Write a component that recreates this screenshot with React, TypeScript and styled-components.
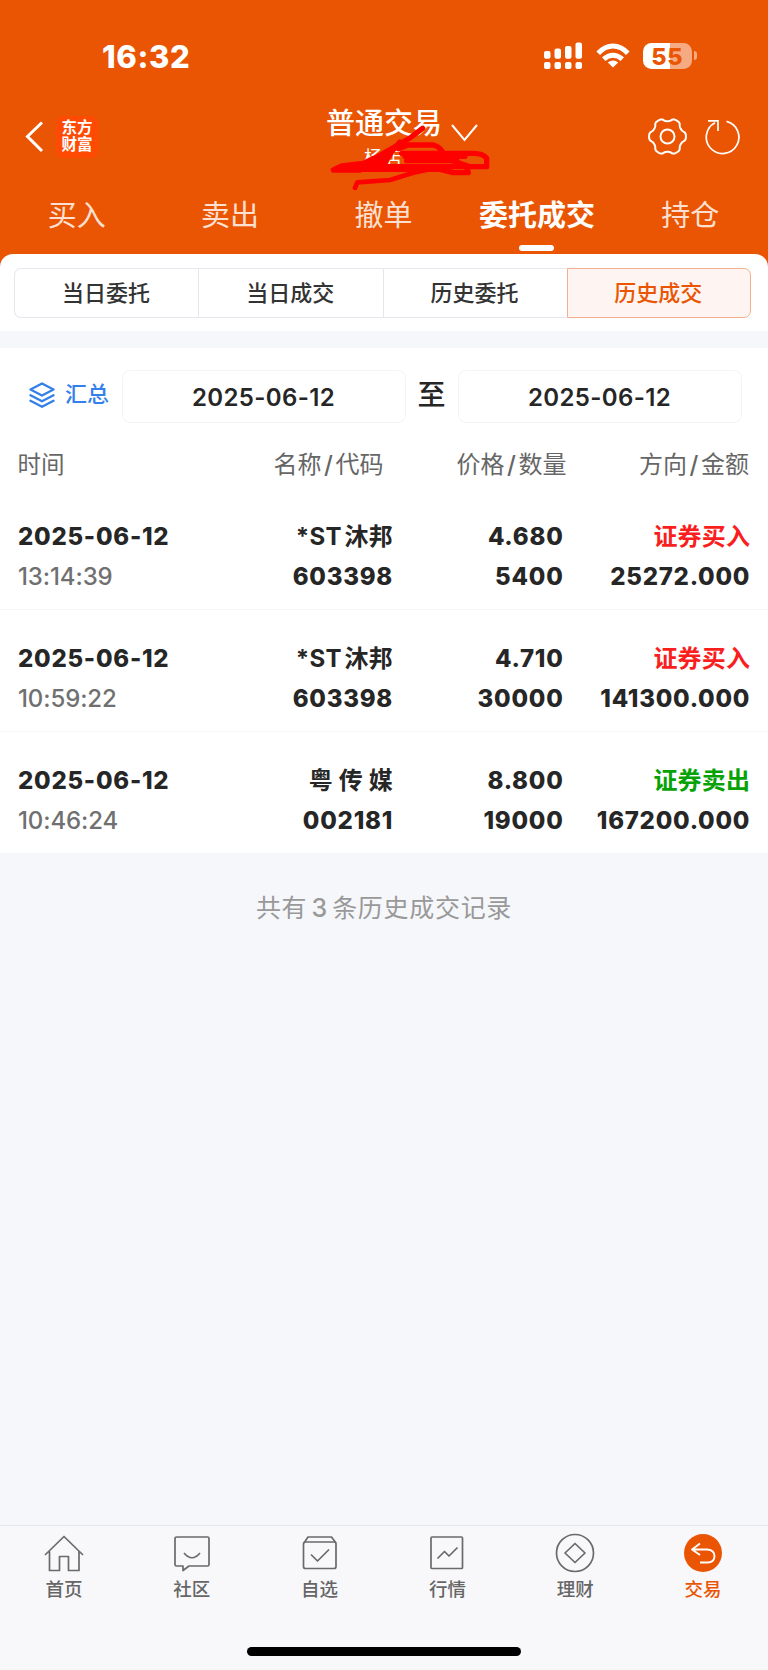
import React from "react";
import styled, { createGlobalStyle } from "styled-components";

const sans = `Inter, "Noto Sans CJK SC", sans-serif`;
const orange = "#ea5504";

const Global = createGlobalStyle`
  * { box-sizing: border-box; }
  body { margin: 0; background: #f6f7fa; font-family: ${sans}; color: #262626; }
  svg { display: block; flex: none; }
`;

const Screen = styled.div`
  width: 768px;
  height: 1670px;
  display: flex;
  flex-direction: column;
  overflow: hidden;
`;

const Top = styled.header`
  height: 268px;
  flex: none;
  background: ${orange};
  color: #fff;
`;

const StatusBar = styled.div`
  height: 90px;
  padding: 40px 71px 0 102px;
  display: flex;
  justify-content: space-between;
`;

const Clock = styled.span`
  font-size: 31px;
  line-height: 34px;
  font-weight: 800;
  letter-spacing: 0.6px;
`;

const StatusIcons = styled.div`
  display: flex;
  gap: 13px;
  align-items: flex-start;
`;

const Battery = styled.div`
  display: flex;
  align-items: center;
  gap: 1.5px;
  margin-top: 2.5px;
`;

const BatteryBody = styled.div`
  width: 49.5px;
  height: 26.5px;
  border-radius: 8.5px;
  background: linear-gradient(90deg, #fff 0 27.5px, #f5aa82 27.5px);
  color: ${orange};
  font-size: 23.5px;
  font-weight: 800;
  line-height: 27px;
  text-align: center;
  letter-spacing: 0.8px;
`;

const BatteryTip = styled.i`
  width: 3.5px;
  height: 9px;
  border-radius: 0 4px 4px 0;
  background: #f5aa82;
`;

const TitleBar = styled.div`
  height: 95px;
  padding: 0 28px 0 25px;
  display: grid;
  grid-template-columns: 301px 115px 1fr;
`;

const Brand = styled.div`
  display: flex;
  gap: 12px;
  padding-top: 25.5px;
`;

const Logo = styled.div`
  width: 42px;
  height: 42px;
  border-radius: 8px;
  background: #ff4a04;
  padding-top: 2px;
  font: 700 15.5px/17.5px "Noto Sans CJK SC", sans-serif;
  text-align: center;
`;

const Account = styled.div`
  position: relative;
`;

const Title = styled.div`
  font-size: 29px;
  line-height: 34px;
  font-weight: 500;
  margin-top: 17px;
  white-space: nowrap;
`;

const Owner = styled.div`
  font-size: 19px;
  line-height: 22px;
  padding-left: 38px;
  margin-top: 7px;
`;

const Scribble = styled.svg`
  position: absolute;
  left: -16px;
  top: 0;
`;

const Actions = styled.div`
  display: flex;
  padding-left: 10px;
`;

const TabRow = styled.nav`
  display: grid;
  grid-template-columns: repeat(5, 1fr);
  height: 68px;
  padding-right: 1px;
`;

const Tab = styled.span<{ $on?: boolean }>`
  display: flex;
  flex-direction: column;
  align-items: center;
  padding-top: 13px;
  font-size: 29px;
  line-height: 36px;
  font-weight: ${(p) => (p.$on ? 700 : 400)};
  color: ${(p) => (p.$on ? "#fff" : "#fde0d1")};
  &::after {
    content: "";
    width: 35px;
    height: 5.5px;
    border-radius: 3px;
    margin-top: 11px;
    background: ${(p) => (p.$on ? "#fff" : "transparent")};
  }
`;

const SegmentPanel = styled.div`
  height: 77.5px;
  margin-top: -14.5px;
  flex: none;
  background: #fff;
  border-radius: 13px 13px 0 0;
  padding: 14px 17px 0 14px;
`;

const Segments = styled.div`
  display: grid;
  grid-template-columns: repeat(4, 1fr);
  height: 49px;
`;

const Segment = styled.span<{ $on?: boolean }>`
  border: 1.5px solid ${(p) => (p.$on ? "#f3b08f" : "#e6e6ec")};
  border-right-width: ${(p) => (p.$on ? "1.5px" : "0")};
  background: ${(p) => (p.$on ? "#fef5f2" : "#fff")};
  color: ${(p) => (p.$on ? orange : "#333")};
  font-size: 22px;
  line-height: 48px;
  padding-right: 1px;
  font-weight: 500;
  text-align: center;
  &:first-child { border-radius: 7px 0 0 7px; }
  &:last-child { border-radius: 0 7px 7px 0; }
`;

const Content = styled.main`
  margin-top: 17px;
  background: #fff;
  flex: none;
`;

const Filter = styled.div`
  display: flex;
  height: 90px;
  padding: 22px 26px 0 29px;
`;

const Summary = styled.div`
  width: 93px;
  display: flex;
  gap: 10px;
  color: #3380ea;
  font-size: 22px;
  font-weight: 500;
  line-height: 30px;
  padding-top: 9px;
  svg { margin-top: 1px; }
`;

const DateBox = styled.div`
  width: 284px;
  height: 53px;
  border: 1.5px solid #f4f4f6;
  border-radius: 8px;
  padding-right: 1px;
  font-size: 24px;
  font-weight: 600;
  line-height: 53px;
  text-align: center;
  letter-spacing: 0.35px;
`;

const Until = styled.div`
  width: 52px;
  font-size: 28px;
  line-height: 34px;
  font-weight: 500;
  text-align: center;
  padding-top: 8px;
  padding-right: 1px;
`;

const Columns = styled.div`
  display: grid;
  grid-template-columns: 160px 206px 183px 182.5px;
  height: 50px;
  padding: 10px 0 0 17.5px;
  font-size: 24px;
  line-height: 34px;
  color: #666;
  text-align: right;
  white-space: nowrap;
  i { font-style: normal; font-weight: 500; margin: 0 2.6px; }
  span:first-child { text-align: left; font-size: 23.5px; }
`;

const Trade = styled.div`
  display: grid;
  grid-template-columns: 174px 201px 170.5px 186.7px;
  height: 122.2px;
  padding: 29px 0 0 18px;
  border-bottom: 1.5px solid #f6f6f8;
  font-size: 24px;
  line-height: 40px;
  font-weight: 800;
  text-align: right;
  white-space: nowrap;
  letter-spacing: 0.75px;
  &:last-child { border-bottom: 0; height: 121px; }
`;

const Cell = styled.div<{ $left?: boolean }>`
  display: flex;
  flex-direction: column;
  align-items: ${(p) => (p.$left ? "flex-start" : "flex-end")};
  span { height: 40px; }
`;

const Name = styled.span<{ $spaced?: boolean }>`
  font-weight: 700;
  letter-spacing: 0.3px;
  word-spacing: ${(p) => (p.$spaced ? "-0.3px" : "0")};
  i { margin-left: 2.5px; font-style: normal; }
`;

const Time = styled.span`
  font-weight: 500;
  letter-spacing: -0.1px;
  color: #707070;
`;

const Side = styled.span<{ $sell?: boolean }>`
  font-weight: 700;
  letter-spacing: 0.2px;
  color: ${(p) => (p.$sell ? "#06a206" : "#f91f1f")};
`;

const Total = styled.div`
  flex: 1;
  padding-top: 36.5px;
  text-align: center;
  font-size: 25px;
  line-height: 36px;
  letter-spacing: 0.7px;
  word-spacing: -3.5px;
  color: #999;
  b { font-weight: 500; }
`;

const BottomNav = styled.nav`
  height: 145.500px;
  flex: none;
  border-top: 1.5px solid #e6e6ec;
  background: #f8f8fb;
`;

const NavItems = styled.div`
  display: grid;
  grid-template-columns: repeat(6, 1fr);
  height: 120px;
  padding-right: 1px;
`;

const NavItem = styled.div<{ $on?: boolean }>`
  display: flex;
  flex-direction: column;
  align-items: center;
  padding-top: 6.5px;
  font-size: 18.5px;
  font-weight: 500;
  line-height: 26px;
  color: ${(p) => (p.$on ? orange : "#666")};
  svg { margin-bottom: 3px; }
`;

const HomeBar = styled.div`
  width: 274px;
  height: 9px;
  border-radius: 5px;
  background: #000;
  margin: 1.5px auto 0;
`;

const navIcons: { label: string; on?: boolean; art: React.ReactNode }[] = [
  { label: "首页", art: <path d="M1 23 20 4.500 39 23M5.500 19.500V38.500H15.500V24.500H24.500V38.500H35V19.500" /> },
  { label: "社区", art: <><path d="M5 5H35.500Q37 5 37 6.500V32.500Q37 34 35.500 34H17L11 38.500V34H4.500Q3 34 3 32.500V6.500Q3 5 5 5Z" /><path d="M12 21Q20 30.500 28 21" /></> },
  { label: "自选", art: <><rect x="3.500" y="10" width="32.500" height="26.500" rx="2" /><path d="M4 11 8 5H31.500L36 11M11 22.500 17.500 29 29 17.500" /></> },
  { label: "行情", art: <><rect x="4" y="5" width="31.500" height="31.500" rx="1" /><path d="M10.500 26.500 17.500 19.500 22 24 30.500 15.500" /></> },
  { label: "理财", art: <><circle cx="20" cy="21" r="18.500" /><path d="M20 11.500 30 21 20 30.500 10 21Z" /></> },
  { label: "交易", on: true, art: <><circle cx="20" cy="21" r="19" fill={orange} stroke="none" /><path stroke="#fff" strokeWidth="1.900" d="M17 11.500 9 17.500 17 23M9.500 17.500H24.500Q31.500 18 31.500 24.500 31 30.500 24.500 30.500H17" /></> },
];

const trades = [
  { time: "13:14:39", name: <>*ST<i>沐邦</i></>, code: "603398", price: "4.680", qty: "5400", side: "证券买入", amount: "25272.000" },
  { time: "10:59:22", name: <>*ST<i>沐邦</i></>, code: "603398", price: "4.710", qty: "30000", side: "证券买入", amount: "141300.000" },
  { time: "10:46:24", name: "粤 传 媒", code: "002181", price: "8.800", qty: "19000", side: "证券卖出", amount: "167200.000", sell: true },
];

/* Six rounded teeth, the first one on the horizontal axis. */
const gear = (() => {
  const pts: string[] = [];
  for (let i = 0; i < 144; i++) {
    const a = (i / 144) * Math.PI * 2;
    const r = 16.8 + 1.7 * Math.tanh(1.6 * Math.cos(6 * a) + 0.3);
    pts.push(`${(20 + r * Math.cos(a)).toFixed(2)} ${(20 + r * Math.sin(a)).toFixed(2)}`);
  }
  return "M" + pts.join("L") + "Z";
})();

export default function App() {
  return (
    <Screen>
      <Global />
      <Top>
        <StatusBar>
          <Clock>16:32</Clock>
          <StatusIcons>
            <svg width="39" height="30" viewBox="545 40 39 30" fill="#fff">
              {[51, 48.5, 46, 42.5].map((y, i) => (
                <g key={y}>
                  <rect x={545 + i * 10.5} y={y} width="6.500" height={58.7 - y} rx="2" />
                  <rect x={545 + i * 10.5} y="62" width="6.500" height="7" rx="2" />
                </g>
              ))}
            </svg>
            <svg width="34" height="30" viewBox="596 40 34 30" fill="none" stroke="#fff" strokeWidth="5">
              <path d="M598.200 53.200Q605 46 613 46T627.800 53.200" />
              <path d="M603.700 59.200Q608 55.200 613 55.200T622.300 59.200" />
              <path d="M613 67.500 607.800 62.500Q613 58.500 618.200 62.500Z" fill="#fff" stroke="none" />
            </svg>
            <Battery>
              <BatteryBody>55</BatteryBody>
              <BatteryTip />
            </Battery>
          </StatusIcons>
        </StatusBar>
        <TitleBar>
          <Brand>
            <svg width="19" height="42" viewBox="25 116 19 42" fill="none" stroke="#fff" strokeWidth="3">
              <path d="M42 122.500 27.500 136.500 42 151" />
            </svg>
            <Logo>东方<br />财富</Logo>
          </Brand>
          <Account>
            <Title>普通交易</Title>
            <Owner>杨店</Owner>
            <Scribble width="185" height="100" viewBox="0 0 555 300" fill="none" stroke="#f00" strokeWidth="16" strokeLinecap="round" strokeLinejoin="round">
              <path d="M338 115 300 144 210 196 160 220 95 228 70 240 150 240 210 218 270 156 240 190" />
              <path fill="#f00" strokeWidth="8" d="M178 222 262 166 225 226Z" />
              <path d="M265 176 295 165H370Q390 170 400 190T445 218L480 230H530V205Q520 190 490 190H275" />
              <path d="M285 199H465M290 212H440" />
              <path d="M150 230H470L475 248H430L390 238H140" />
              <path strokeWidth="14" d="M135 294 142 277 240 270 310 248 350 240" />
            </Scribble>
          </Account>
          <Actions>
            <svg width="290" height="76" viewBox="451 90 290 76" fill="none" stroke="#fff" strokeWidth="2">
              <path d="M452 125 464.500 140 477 125" />
              <g transform="translate(647.500 116.500)"><path d={gear} /><circle cx="20" cy="20" r="7" /></g>
              <path strokeWidth="1.700" d="M726.500 121.400A16.300 16.300 0 1 1 715 122.800M708 120.800H718V131" />
            </svg>
          </Actions>
        </TitleBar>
        <TabRow>
          <Tab>买入</Tab><Tab>卖出</Tab><Tab>撤单</Tab><Tab $on>委托成交</Tab><Tab>持仓</Tab>
        </TabRow>
      </Top>
      <SegmentPanel>
        <Segments>
          <Segment>当日委托</Segment><Segment>当日成交</Segment><Segment>历史委托</Segment><Segment $on>历史成交</Segment>
        </Segments>
      </SegmentPanel>
      <Content>
        <Filter>
          <Summary>
            <svg width="26" height="28" viewBox="29 380 26 28" fill="none" stroke="#3380ea" strokeWidth="2.300" strokeLinejoin="round" strokeLinecap="round">
              <path d="M42 383.500 53.500 389.500 42 395.500 30.500 389.500ZM30.500 395.300 42 401.300 53.500 395.300M30.500 400.800 42 406.800 53.500 400.800" />
            </svg>
            汇总
          </Summary>
          <DateBox>2025-06-12</DateBox>
          <Until>至</Until>
          <DateBox>2025-06-12</DateBox>
        </Filter>
        <Columns>
          <span>时间</span>
          <span>名称<i>/</i>代码</span>
          <span>价格<i>/</i>数量</span>
          <span>方向<i>/</i>金额</span>
        </Columns>
        {trades.map((t) => (
          <Trade key={t.time}>
            <Cell $left><span>2025-06-12</span><Time>{t.time}</Time></Cell>
            <Cell><Name $spaced={t.sell}>{t.name}</Name><span>{t.code}</span></Cell>
            <Cell><span>{t.price}</span><span>{t.qty}</span></Cell>
            <Cell><Side $sell={t.sell}>{t.side}</Side><span>{t.amount}</span></Cell>
          </Trade>
        ))}
      </Content>
      <Total>共有 <b>3</b> 条历史成交记录</Total>
      <BottomNav>
        <NavItems>
          {navIcons.map((n) => (
            <NavItem key={n.label} $on={n.on}>
              <svg width="40" height="41" viewBox="0 0 40 41" fill="none" stroke="#6a6a6a" strokeWidth="1.700" strokeLinejoin="round">{n.art}</svg>
              {n.label}
            </NavItem>
          ))}
        </NavItems>
        <HomeBar />
      </BottomNav>
    </Screen>
  );
}
